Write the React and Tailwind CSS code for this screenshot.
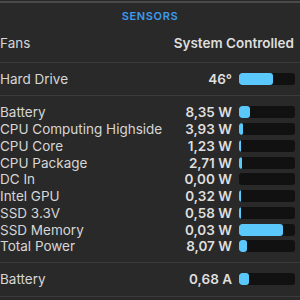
const powerRows = [
  { label: 'Battery', value: '8,35 W', fill: 11 },
  { label: 'CPU Computing Highside', value: '3,93 W', fill: 4 },
  { label: 'CPU Core', value: '1,23 W', fill: 2 },
  { label: 'CPU Package', value: '2,71 W', fill: 3 },
  { label: 'DC In', value: '0,00 W', fill: 0 },
  { label: 'Intel GPU', value: '0,32 W', fill: 2 },
  { label: 'SSD 3.3V', value: '0,58 W', fill: 2 },
  { label: 'SSD Memory', value: '0,03 W', fill: 44 },
  { label: 'Total Power', value: '8,07 W', fill: 8 },
];

function Bar({ fill }) {
  return (
    <div className="flex h-[12px] w-[56px] shrink-0 overflow-hidden rounded-[3px] bg-[#111111]">
      {fill > 0 && <div className="h-full rounded-[3px] bg-[#5ac8fa]" style={{ width: fill }} />}
    </div>
  );
}

function Row({ label, value, fill, className }) {
  return (
    <div className={`flex items-center ${className}`}>
      <span className="flex-1 truncate text-[#d6d6d6]">{label}</span>
      <span className="font-semibold text-[#dedede]">{value}</span>
      <div className="ml-[7px] mr-[5px]">
        <Bar fill={fill} />
      </div>
    </div>
  );
}

export default function App() {
  return (
    <div
      className="h-[300px] w-[300px] overflow-hidden bg-[#2a2929] text-[13.5px]"
      style={{ fontFamily: 'Inter, "Noto Sans", sans-serif' }}
    >
      <div className="mt-px h-[2px] bg-[#4a4a4a]" />
      <div className="flex h-[26px] items-center justify-center text-[11px] font-semibold tracking-[0.06em] text-[#3d9bec]">
        SENSORS
      </div>

      <div className="flex h-[33px] items-center justify-between pb-[5px] pr-[6px]">
        <span className="text-[#d6d6d6]">Fans</span>
        <span className="font-semibold text-[#dedede]">System Controlled</span>
      </div>
      <div className="h-px bg-[#3b3b3b]" />

      <Row label="Hard Drive" value="46°" fill={34} className="h-[32px]" />
      <div className="h-px bg-[#3b3b3b]" />

      <div className="pt-[8px] pb-[7px]">
        {powerRows.map((row) => (
          <Row key={row.label} {...row} className="h-[16.75px]" />
        ))}
      </div>
      <div className="h-px bg-[#3b3b3b]" />

      <Row label="Battery" value="0,68 A" fill={10} className="h-[33px]" />
      <div className="h-px bg-[#3b3b3b]" />
    </div>
  );
}
